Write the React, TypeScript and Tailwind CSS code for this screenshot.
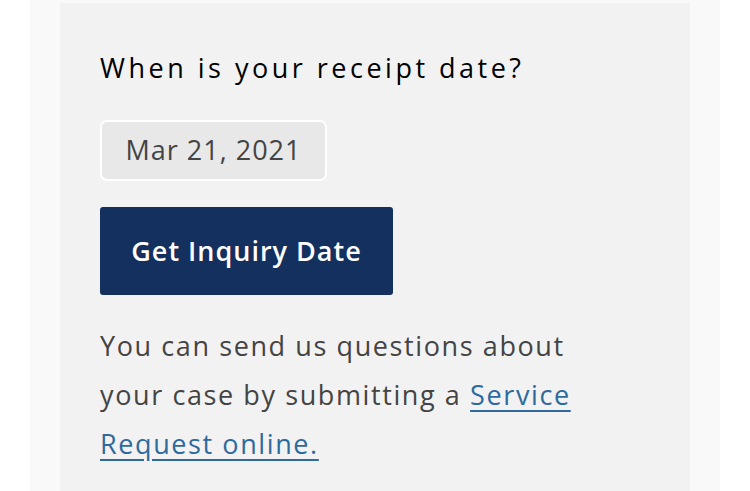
export default function App() {
  return (
    <div className="h-[491px] w-[750px] overflow-hidden bg-white">
      <div className="mx-[30px] h-full bg-[#f9f9f9] px-[30px] pt-[3px]">
        <div
          className="h-full bg-[#f2f2f2] pl-[40px] pt-[45px]"
          style={{ fontFamily: '"Open Sans", sans-serif' }}
        >
          <h2 className="text-[27px] leading-[40px] font-medium tracking-[3.5px] text-black">
            When is your receipt date?
          </h2>

          <div className="mt-[32px] flex h-[61px] w-[227px] items-center justify-center rounded-[7px] border-2 border-white bg-[#e8e8e8] text-[27px] tracking-[1px] text-[#444]">
            Mar 21, 2021
          </div>

          <button className="mt-[26px] flex h-[88px] w-[293px] items-center justify-center rounded-[3px] bg-[#14305e] text-[27px] font-semibold tracking-[1px] text-white">
            Get Inquiry Date
          </button>

          <p className="mt-[26px] w-[482px] text-[27px] leading-[49px] tracking-[1.6px] text-[#444]">
            You can send us questions about your case by submitting a{' '}
            <a href="#" className="text-[#2e6a9e] underline underline-offset-[5px]">
              Service Request online.
            </a>
          </p>
        </div>
      </div>
    </div>
  );
}
